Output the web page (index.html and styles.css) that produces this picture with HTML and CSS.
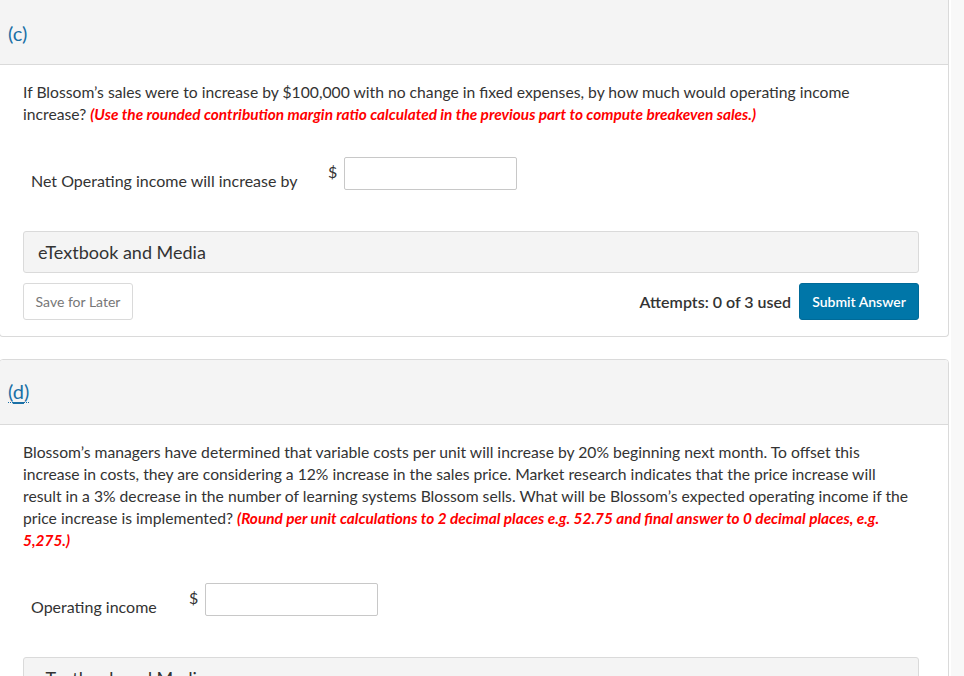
FILE: index.html
```html
<!DOCTYPE html>
<html>
<head>
<meta charset="utf-8">
<link rel="stylesheet" href="styles.css">
</head>
<body>
<div class="main">
  <section class="card card-first">
    <div class="card-head"><span class="part">(c)</span></div>
    <div class="card-body">
      <p class="question">If Blossom’s sales were to increase by $100,000 with no change in fixed expenses, by how much would operating income increase? <em class="note">(Use the rounded contribution margin ratio calculated in the previous part to compute breakeven sales.)</em></p>
      <div class="answer-row">
        <span class="label label-c">Net Operating income will increase by</span>
        <span class="dollar">$</span>
        <input class="field" type="text">
      </div>
      <div class="media">eTextbook and Media</div>
      <div class="actions">
        <button class="btn-save">Save for Later</button>
        <div class="right">
          <span class="attempts">Attempts: 0 of 3 used</span>
          <button class="btn-submit">Submit Answer</button>
        </div>
      </div>
    </div>
  </section>
  <section class="card">
    <div class="card-head"><span class="part part-link"><span class="p">(</span><span class="d">d</span><span class="p">)</span></span></div>
    <div class="card-body">
      <p class="question">Blossom’s managers have determined that variable costs per unit will increase by 20% beginning next month. To offset this increase in costs, they are considering a 12% increase in the sales price. Market research indicates that the price increase will result in a 3% decrease in the number of learning systems Blossom sells. What will be Blossom’s expected operating income if the price increase is implemented? <em class="note">(Round per unit calculations to 2 decimal places e.g. 52.75 and final answer to 0 decimal places, e.g. 5,275.)</em></p>
      <div class="answer-row">
        <span class="label label-d">Operating income</span>
        <span class="dollar">$</span>
        <input class="field" type="text">
      </div>
      <div class="media">eTextbook and Media</div>
    </div>
  </section>
</div>
<div class="side"></div>
</body>
</html>
```
FILE: styles.css
```css
html, body {
  margin: 0;
  padding: 0;
  height: 100%;
  overflow: hidden;
}
body {
  display: flex;
  font-family: Lato, "Open Sans", sans-serif;
  color: #333;
  background: #fff;
}
.main {
  width: 951px;
  flex: none;
  background: #fff;
}
.side {
  flex: 1;
  background: #f8f8f8;
}
.card {
  margin-left: -1px;
  width: 950px;
  border: 1px solid #dadada;
  border-radius: 4px;
  box-sizing: border-box;
  margin-bottom: 22px;
  overflow: hidden;
  background: #fff;
}
.card-first {
  border-top: none;
  border-radius: 0 0 4px 4px;
}
.card-head {
  background: #f4f4f4;
  border-bottom: 1px solid #dadada;
  box-sizing: border-box;
  height: 65px;
  padding: 21px 0 0 8px;
}
.card-first .card-head {
  height: 65px;
  padding-top: 20px;
}
.part {
  font-size: 20px;
  line-height: 26px;
  color: #1a70a6;
}
.part-link {
  display: inline-block;
  line-height: 20px;
  border-bottom: 1px dotted #1a70a6;
  padding-bottom: 1px;
}
.part-link .d {
  text-decoration: underline;
  text-decoration-thickness: 2px;
  text-underline-offset: 3px;
}
.card-body {
  padding: 16px 32px 16px 23px;
}
.question {
  margin: 0;
  font-size: 15.7px;
  line-height: 22px;
}
.note {
  color: #f00;
  font-weight: 700;
  font-style: italic;
  font-size: 15.4px;
}
.answer-row {
  display: flex;
  align-items: flex-start;
  height: 33px;
  margin-top: 32px;
  padding-left: 8px;
}
.label {
  font-size: 16px;
  line-height: 22px;
  margin-top: 13px;
}
.label-c { width: 297px; }
.label-d { width: 158px; }
.dollar {
  font-size: 16px;
  line-height: 22px;
  margin-top: 4px;
  width: 16px;
}
.field {
  width: 173px;
  height: 33px;
  box-sizing: border-box;
  border: 1px solid #c8c8c8;
  border-radius: 2px;
  margin: 0;
  padding: 0 6px;
  font: inherit;
  background: #fff;
}
.media {
  margin-top: 41px;
  margin-right: -3px;
  height: 42px;
  box-sizing: border-box;
  border: 1px solid #dadada;
  border-radius: 3px;
  background: #f4f4f4;
  font-size: 18px;
  line-height: 40px;
  padding-left: 14px;
}
.actions {
  display: flex;
  justify-content: space-between;
  align-items: center;
  margin-top: 10px;
  margin-right: -3px;
}
.btn-save {
  width: 110px;
  height: 37px;
  box-sizing: border-box;
  background: #fff;
  border: 1px solid #dadada;
  border-radius: 3px;
  font-family: Lato, sans-serif;
  font-size: 14px;
  color: #777;
  padding: 0;
}
.right {
  display: flex;
  align-items: center;
  gap: 8px;
}
.attempts {
  font-size: 16px;
  font-weight: 600;
  color: #333;
}
.btn-submit {
  width: 120px;
  height: 37px;
  box-sizing: border-box;
  background: #0076a8;
  border: 1px solid #006a98;
  border-radius: 3px;
  color: #fff;
  font-family: Lato, sans-serif;
  font-size: 14px;
  font-weight: 600;
  padding: 0;
}
```
